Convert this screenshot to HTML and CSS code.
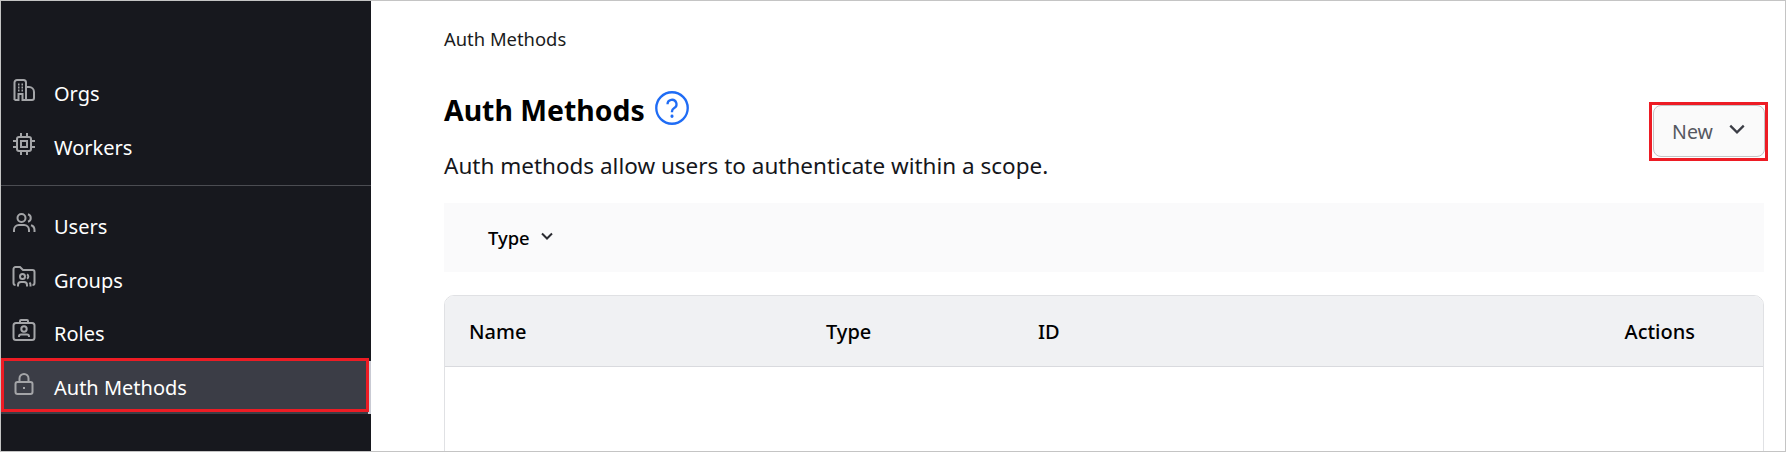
FILE: index.html
```html
<!DOCTYPE html>
<html lang="en">
<head>
    <meta charset="UTF-8">
    <meta name="viewport" content="width=device-width, initial-scale=1.0">
    <title>Auth Methods</title>
    <link rel="stylesheet" href="styles.css">
</head>
<body>
    <div class="frame">
        <!-- Sidebar -->
        <nav class="sidebar">
            <ul class="nav-group nav-group-top">
                <li class="nav-item">
                    <svg class="nav-icon" viewBox="0 0 24 24"><path d="M2.500 22V4.500A2.500 2.500 0 0 1 5 2h6.500A2.500 2.500 0 0 1 14 4.500V22M2.500 22h4v-6h4v6H14m0-13h3a5 5 0 0 1 5 5v6a2 2 0 0 1-2 2h-6"/><path class="dots" d="M6 6.500h1.500M9.500 6.500H11M6 9.500h1.500M9.500 9.500H11M6 12.500h1.500M9.500 12.500H11"/></svg>
                    <span>Orgs</span>
                </li>
                <li class="nav-item">
                    <svg class="nav-icon" viewBox="0 0 24 24"><rect x="5" y="5" width="14" height="14" rx="2"/><rect x="9" y="9" width="6" height="6"/><path d="M9 1V5M15 1V5M9 19v4M15 19v4M1 9H5M1 15H5M19 9h4M19 15h4"/></svg>
                    <span>Workers</span>
                </li>
            </ul>
            <ul class="nav-group">
                <li class="nav-item">
                    <svg class="nav-icon" viewBox="0 0 24 24"><circle cx="9.500" cy="7" r="4"/><path d="M2 21v-2a5 5 0 0 1 5-5h5a5 5 0 0 1 5 5v2M16 3.200a4 4 0 0 1 0 7.600M19 14.200a5 5 0 0 1 3.500 4.800v2"/></svg>
                    <span>Users</span>
                </li>
                <li class="nav-item">
                    <svg class="nav-icon" viewBox="0 0 24 24"><path d="M3.500 20A2 2 0 0 1 1.500 18V4A2 2 0 0 1 3.500 2H8l3 3h9.500a2 2 0 0 1 2 2v11a2 2 0 0 1-2 2"/><circle cx="10.500" cy="11.500" r="2.500"/><path d="M6 21.500V20a3 3 0 0 1 3-3h3a3 3 0 0 1 3 3v1.500M15 9.300a2.500 2.500 0 0 1 0 4.400M17.500 17.500a3 3 0 0 1 1 2.500v1.500"/></svg>
                    <span>Groups</span>
                </li>
                <li class="nav-item">
                    <svg class="nav-icon" viewBox="0 0 24 24"><rect x="1.500" y="5" width="21" height="17" rx="2.500"/><path d="M8 5V3a1 1 0 0 1 1-1h6a1 1 0 0 1 1 1v2"/><circle cx="12" cy="11" r="2.700"/><path d="M7 19v-.5a2 2 0 0 1 2-2h6a2 2 0 0 1 2 2v.5"/></svg>
                    <span>Roles</span>
                </li>
                <li class="nav-item nav-item-active">
                    <svg class="nav-icon" viewBox="0 0 24 24"><rect x="3.500" y="10" width="17" height="12" rx="2"/><path d="M7.500 10V6.500a4.500 4.500 0 0 1 9 0V10"/><path class="dots" d="M12 15v2"/></svg>
                    <span>Auth Methods</span>
                </li>
            </ul>
        </nav>

        <!-- Main content -->
        <main class="content">
            <div class="breadcrumb">Auth Methods</div>
            <div class="page-header">
                <div>
                    <h1 class="page-title">
                        Auth Methods
                        <svg class="help-icon" viewBox="0 0 32 32"><circle cx="16" cy="16" r="14.800"/><path d="M11.800 12.500a4.200 4.200 0 1 1 6.300 3.600c-1.300.8-2.100 1.600-2.100 3.100v.8"/><path class="help-dot" d="M16 23.500v.6"/></svg>
                    </h1>
                    <p class="page-desc">Auth methods allow users to authenticate within a scope.</p>
                </div>
                <button class="new-btn">
                    New
                    <svg class="new-chevron" viewBox="0 0 16 16"><path d="M2 5l6 6 6-6"/></svg>
                </button>
            </div>

            <div class="filter-bar">
                <span class="filter">
                    Type
                    <svg class="filter-chevron" viewBox="0 0 16 16"><path d="M3 5.500l5 5 5-5"/></svg>
                </span>
            </div>

            <div class="table-wrap">
                <div class="table-head">
                    <div class="col-name">Name</div>
                    <div class="col-type">Type</div>
                    <div class="col-id">ID</div>
                    <div class="col-actions">Actions</div>
                </div>
            </div>
        </main>
    </div>
</body>
</html>
```

FILE: styles.css
```css
/* Basic reset */
*, *::after {
    margin: 0;
    padding: 0;
    box-sizing: border-box;
}

html, body {
    height: 100%;
    overflow: hidden;
}

body {
    font-family: "Noto Sans", "Open Sans", Arial, sans-serif;
    background: #fff;
    color: #000;
}

/* Outer screenshot border */
.frame {
    display: flex;
    height: 452px;
    border: 1px solid #c4c4c4;
    overflow: hidden;
}

/* Sidebar */
.sidebar {
    width: 370px;
    flex-shrink: 0;
    background: #17181e;
    padding-top: 66px;
}

.nav-group {
    list-style: none;
}

.nav-group-top {
    padding-bottom: 11px;
    border-bottom: 1px solid #4b4c52;
    margin-bottom: 14px;
}

.nav-item {
    display: flex;
    align-items: center;
    height: 53.5px;
    padding-left: 11px;
    color: #fff;
    font-size: 20px;
}

.nav-icon {
    width: 24px;
    height: 24px;
    margin-right: 18px;
    margin-top: -7px;
    fill: none;
    stroke: #a4a5a8;
    stroke-width: 2;
    flex-shrink: 0;
}

.nav-item-active {
    position: relative;
    background: #3b3d46;
    border-right: 3px solid #c9cad3;
}

/* red highlight drawn on top of the screenshot */
.nav-item-active::after {
    content: "";
    position: absolute;
    top: -3px;
    left: 0;
    width: 368px;
    height: 54px;
    border: 3px solid #ed1c24;
}

/* Main content */
.content {
    flex: 1;
    padding: 26px 21px 0 73px;
}

.breadcrumb {
    font-size: 18.4px;
    line-height: 24px;
    color: #1a1b20;
}

.page-header {
    display: flex;
    justify-content: space-between;
    margin-top: 42px;
}

.page-title {
    display: flex;
    align-items: center;
    font-size: 28.4px;
    line-height: 34px;
    font-weight: 700;
}

.help-icon {
    width: 34px;
    height: 34px;
    margin-left: 10px;
    margin-top: -5px;
    fill: none;
    stroke: #1f6cf5;
    stroke-width: 2.2;
}

.help-dot {
    stroke-linecap: round;
    stroke-width: 2.8;
}

.page-desc {
    font-size: 22.5px;
    line-height: 28px;
    margin-top: 25px;
    color: #15161b;
}

.new-btn {
    position: relative;
    width: 112px;
    height: 52px;
    margin-top: 12px;
    margin-right: -1px;
    display: flex;
    align-items: center;
    justify-content: center;
    gap: 15px;
    font-family: inherit;
    font-size: 19.5px;
    color: #555760;
    background: #fafafa;
    border: 1px solid #c4c4c6;
    border-radius: 8px;
}

.new-btn::after {
    content: "";
    position: absolute;
    top: -4px;
    right: -4px;
    bottom: -5px;
    left: -5px;
    border: 3px solid #ed1c24;
}

.new-chevron {
    width: 18px;
    height: 18px;
    margin-top: -4px;
    fill: none;
    stroke: #3b3d45;
    stroke-width: 2;
}

/* Filter bar */
.filter-bar {
    display: flex;
    align-items: center;
    height: 69px;
    margin-top: 23px;
    padding-left: 44px;
    background: #fafafb;
}

.filter {
    display: flex;
    align-items: center;
    gap: 9px;
    font-size: 18.4px;
    font-weight: 500;
}

.filter-chevron {
    width: 16px;
    height: 16px;
    margin-top: -3px;
    fill: none;
    stroke: #2a2b31;
    stroke-width: 2;
}

/* Table */
.table-wrap {
    margin-top: 23px;
    height: 200px;
    border: 1px solid #e0e1e4;
    border-radius: 10px 10px 0 0;
    overflow: hidden;
}

.table-head {
    display: flex;
    align-items: center;
    height: 71px;
    background: #f0f1f3;
    border-bottom: 1px solid #d9dade;
    font-size: 20px;
    font-weight: 500;
}

.col-name {
    width: 381px;
    padding-left: 24px;
}

.col-type {
    width: 212px;
}

.col-id {
    flex: 1;
}

.col-actions {
    padding-right: 68px;
}
```
